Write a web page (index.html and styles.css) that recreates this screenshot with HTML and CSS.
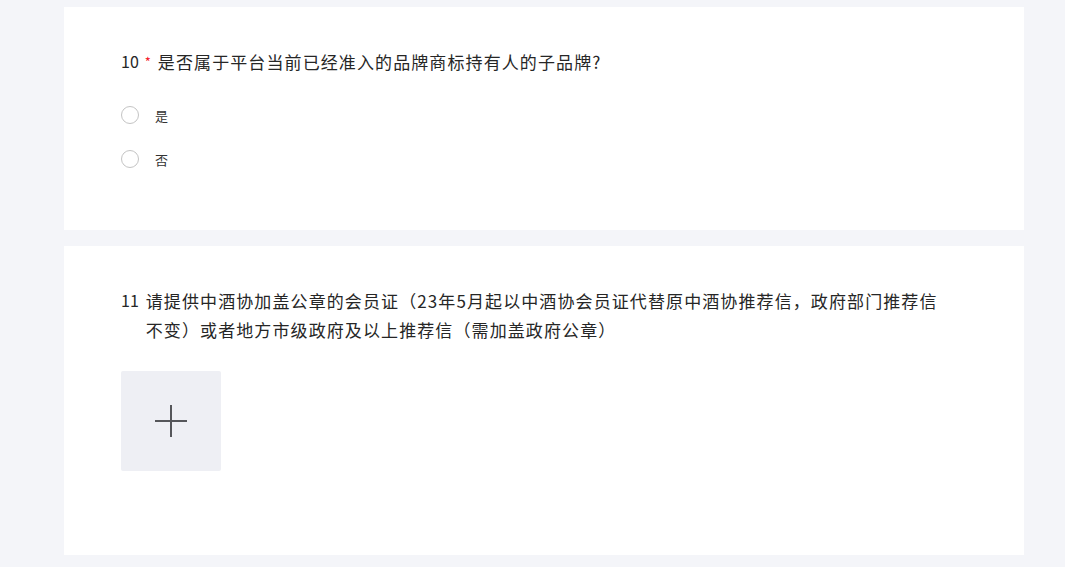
FILE: index.html
```html
<!DOCTYPE html>
<html lang="zh-CN">
<head>
<meta charset="utf-8">
<link rel="stylesheet" href="styles.css">
</head>
<body>
<div class="page">
  <section class="card card-q10">
    <div class="q-title">
      <span class="q-num">10</span>
      <span class="q-req">*</span>
      <span class="q-text">是否属于平台当前已经准入的品牌商标持有人的子品牌?</span>
    </div>
    <div class="options">
      <label class="option"><span class="radio"></span><span class="opt-text">是</span></label>
      <label class="option"><span class="radio"></span><span class="opt-text">否</span></label>
    </div>
  </section>
  <section class="card card-q11">
    <div class="q-title">
      <span class="q-num">11</span>
      <span class="q-text q11-text">请提供中酒协加盖公章的会员证（23年5月起以中酒协会员证代替原中酒协推荐信，政府部门推荐信不变）或者地方市级政府及以上推荐信（需加盖政府公章）</span>
    </div>
    <div class="upload">
      <svg width="32" height="32" viewBox="0 0 32 32"><path d="M16 0V32M0 16H32" stroke="#55565a" stroke-width="2"/></svg>
    </div>
  </section>
</div>
</body>
</html>
```
FILE: styles.css
```css
html, body {
  margin: 0;
  padding: 0;
  background: #f4f5f9;
  font-family: "Noto Sans CJK SC", "Noto Sans", sans-serif;
  color: #262626;
}
.page {
  width: 960px;
  margin-left: 64px;
  padding-top: 7px;
  display: flex;
  flex-direction: column;
  gap: 16px;
}
.card {
  background: #fff;
  padding: 0 57px;
}
.card-q10 {
  height: 223px;
  padding-top: 40px;
  box-sizing: border-box;
}
.card-q11 {
  height: 309px;
  padding-top: 40px;
  box-sizing: border-box;
}
.q-title {
  display: flex;
  align-items: flex-start;
  font-size: 16px;
  line-height: 29px;
}
.q-num {
  flex: none;
  margin-right: 7px;
}
.q-req {
  flex: none;
  color: #f5222d;
  margin-right: 7px;
  margin-left: -1px;
  font-size: 13px;
}
.q-text {
  font-size: 17px;
  letter-spacing: 1.1px;
}
.q11-text {
  max-width: 800px;
}
.options {
  margin-top: 30px;
  display: flex;
  flex-direction: column;
  gap: 26px;
}
.option {
  display: flex;
  align-items: center;
  height: 18px;
  font-size: 13px;
  color: #333;
}
.radio {
  width: 16px;
  height: 16px;
  border: 1px solid #c4c4c4;
  border-radius: 50%;
  margin-right: 16px;
  flex: none;
}
.upload {
  margin-top: 27px;
  width: 100px;
  height: 100px;
  background: #eeeff4;
  border-radius: 2px;
  display: flex;
  align-items: center;
  justify-content: center;
}
```
